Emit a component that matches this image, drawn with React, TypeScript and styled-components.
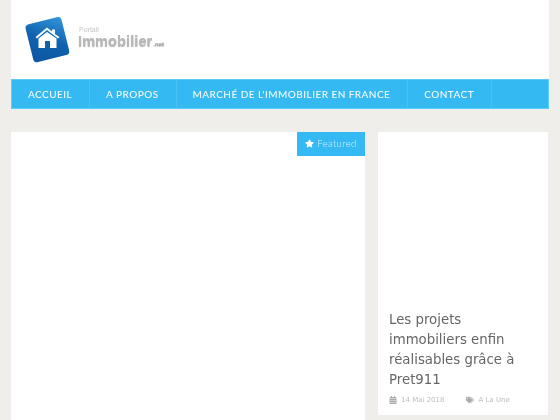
import * as React from 'react';
import styled, { createGlobalStyle } from 'styled-components';
import { FaStar, FaCalendarAlt, FaTags } from 'react-icons/fa';

const GlobalStyle = createGlobalStyle`
  html, body {
    margin: 0;
    padding: 0;
    height: 420px;
    overflow: hidden;
    background: #f0eeeb;
  }
`;

const Page = styled.div`
  width: 538px;
  height: 420px;
  margin-left: 11px;
  overflow: hidden;
  font-family: "DejaVu Sans", sans-serif;
  filter: blur(0.35px);
`;

const Header = styled.header`
  height: 79px;
  background: #fff;
  display: flex;
  align-items: flex-start;
  padding: 15px 0 0 13px;
  box-sizing: border-box;
  gap: 4px;
`;

const LogoWords = styled.div`
  display: flex;
  flex-direction: column;
  margin-top: 11px;
  filter: blur(0.7px);
  color: #b8b8b8;
  font-family: "Liberation Sans", sans-serif;
`;

const LogoSmall = styled.span`
  font-size: 7px;
  line-height: 8px;
  padding-left: 1px;
  color: #c6c6c6;
`;

const LogoBig = styled.span`
  font-size: 14.5px;
  line-height: 15px;
  font-weight: 700;
  letter-spacing: 0.1px;
  text-shadow: 0 1px 1px #aaa;
  white-space: nowrap;
  small {
    font-size: 6px;
    color: #999;
    margin-left: 1px;
    letter-spacing: 0;
  }
`;

const Nav = styled.nav`
  height: 30px;
  background: #35b9f3;
  border: 1px solid #5ccbf6;
  box-sizing: border-box;
  display: flex;
`;

const NavItem = styled.a`
  display: flex;
  align-items: center;
  padding: 0 17px 0 16px;
  border-right: 1px solid #4cc0f2;
  color: #f4fbff;
  font-family: Lato, sans-serif;
  font-size: 10px;
  font-weight: 500;
  letter-spacing: 0.45px;
  white-space: nowrap;
`;

const Content = styled.div`
  display: flex;
  align-items: flex-start;
  margin-top: 23px;
  gap: 13px;
`;

const Featured = styled.section`
  position: relative;
  width: 354px;
  height: 288px;
  background: #fff;
`;

const Badge = styled.div`
  position: absolute;
  top: 0;
  right: 0;
  width: 68px;
  height: 24px;
  padding-bottom: 1px;
  box-sizing: border-box;
  background: #35b9f3;
  color: #d8f2ff;
  display: flex;
  align-items: center;
  justify-content: center;
  gap: 3px;
  font-family: Lato, sans-serif;
  font-size: 9.5px;
  font-weight: 300;
  letter-spacing: 0.4px;
`;

const Side = styled.aside`
  width: 170px;
  height: 283px;
  background: #fff;
  box-sizing: border-box;
  padding: 178px 11px 0;
`;

const Title = styled.h2`
  margin: 0;
  font-size: 13.3px;
  font-weight: 400;
  line-height: 20px;
  color: #666;
`;

const Meta = styled.div`
  display: flex;
  align-items: center;
  margin-top: 6px;
  font-size: 7px;
  color: #bdbdbd;
`;

const MetaItem = styled.span`
  display: flex;
  align-items: center;
  gap: 4px;
  margin-right: 22px;
  svg {
    color: #aaa;
  }
`;

const LogoMark = () => (
  <svg width="50" height="50" viewBox="0 0 50 50">
    <defs>
      <linearGradient id="tile" x1="0.8" y1="0" x2="0.2" y2="1">
        <stop offset="0" stopColor="#2f8fd6" />
        <stop offset="0.5" stopColor="#0f62ae" />
        <stop offset="1" stopColor="#0d57a3" />
      </linearGradient>
    </defs>
    <rect x="5" y="5" width="37" height="39" rx="4" fill="url(#tile)" transform="rotate(-14 24 25)" />
    <path d="M11.500 22 L23 12.500 L28 16.500 L28 14.500 L31 14.500 L31 19 L35.500 22 L34 23.500 L23 15 L13 23.500 Z" fill="#f4fbff" />
    <path d="M14.500 23.500 L23 17 L32.500 23.500 L32.500 33 L26 33 L26 26 L21 26 L21 33 L14.500 33 Z" fill="#fff" />
  </svg>
);

const items = ['ACCUEIL', 'A PROPOS', "MARCHÉ DE L'IMMOBILIER EN FRANCE", 'CONTACT'];

export default function App() {
  return (
    <>
      <GlobalStyle />
      <Page>
        <Header>
          <LogoMark />
          <LogoWords>
            <LogoSmall>Portail</LogoSmall>
            <LogoBig>Immobilier<small>.net</small></LogoBig>
          </LogoWords>
        </Header>
        <Nav>
          {items.map((item) => (
            <NavItem key={item}>{item}</NavItem>
          ))}
        </Nav>
        <Content>
          <Featured>
            <Badge><FaStar size={9} color="#fff" /> Featured</Badge>
          </Featured>
          <Side>
            <Title>Les projets immobiliers enfin réalisables grâce à Pret911</Title>
            <Meta>
              <MetaItem><FaCalendarAlt size={8} /> 14 Mai 2018</MetaItem>
              <MetaItem><FaTags size={8} /> A La Une</MetaItem>
            </Meta>
          </Side>
        </Content>
      </Page>
    </>
  );
}
